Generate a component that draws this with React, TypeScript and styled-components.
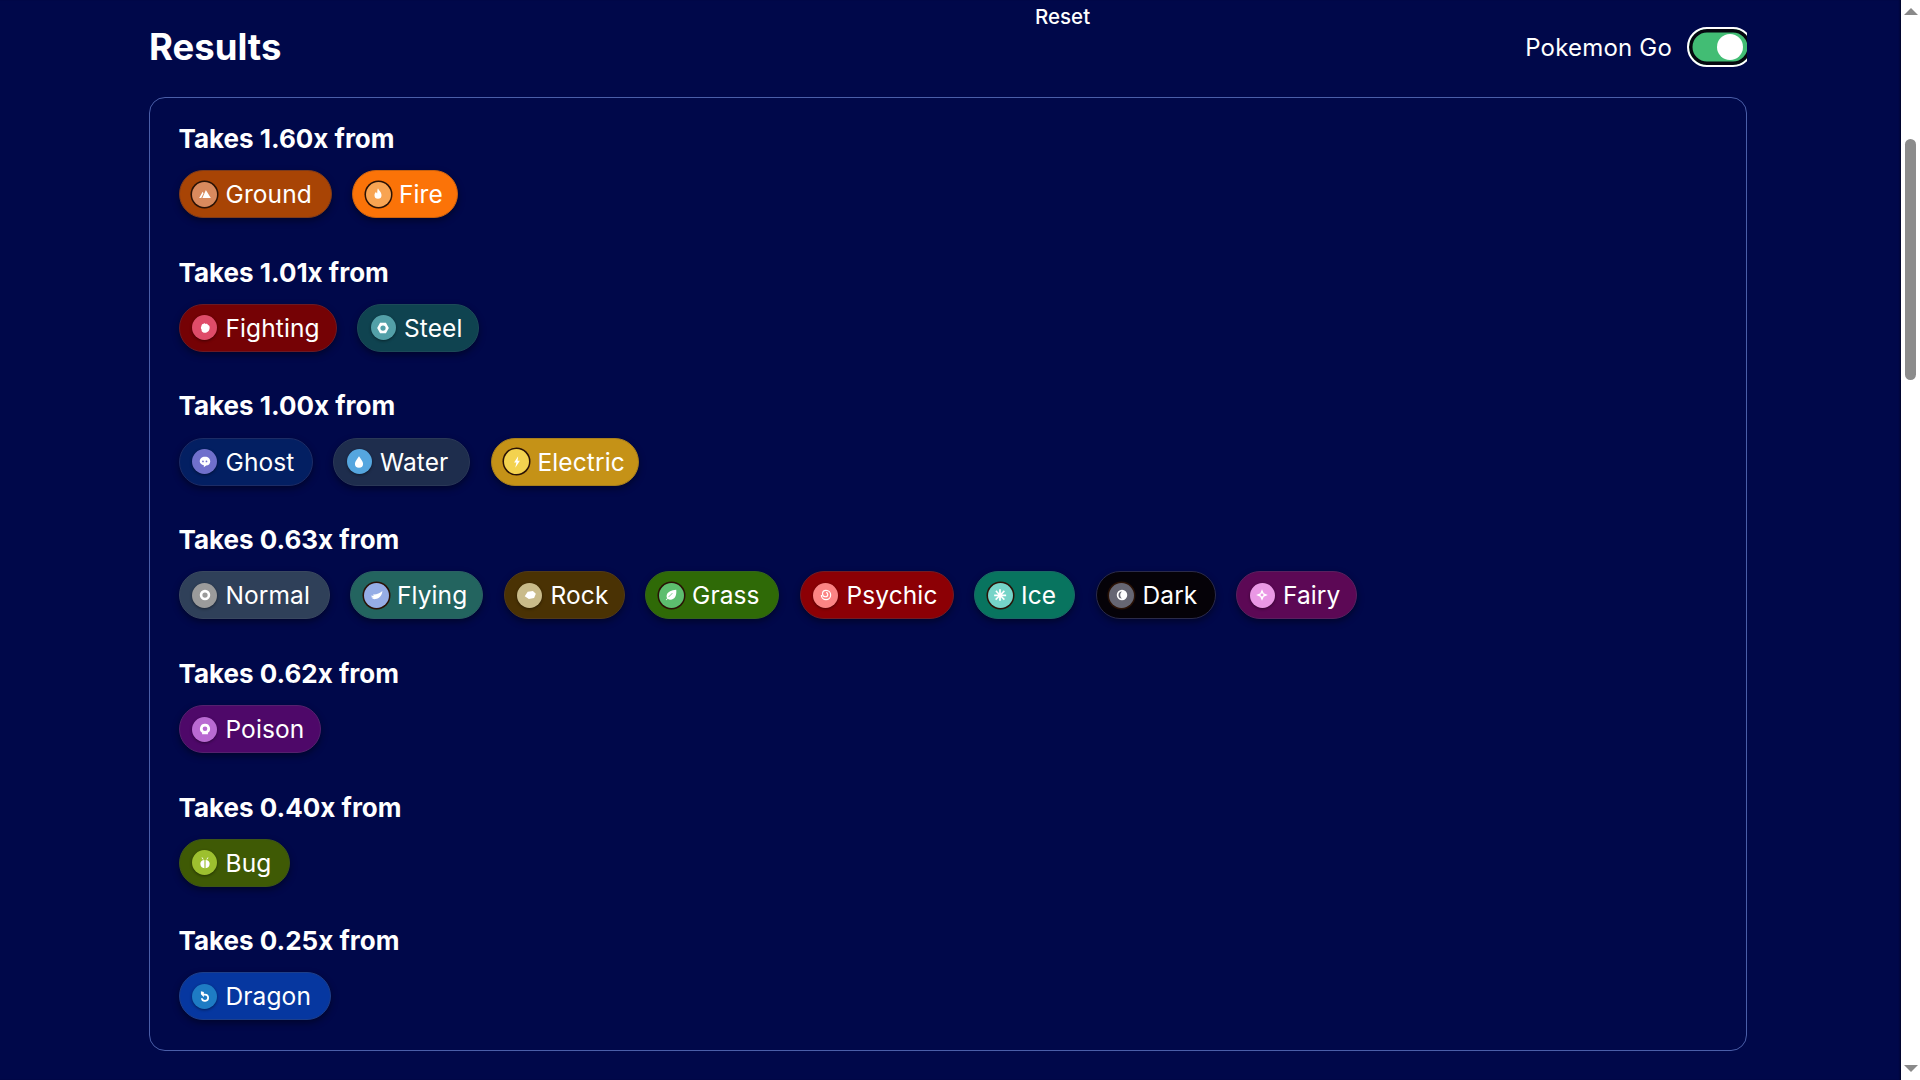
import React from 'react'
import styled, { createGlobalStyle } from 'styled-components'

const GlobalStyle = createGlobalStyle`
  html, body {
    margin: 0;
    padding: 0;
    height: 1080px;
    overflow: hidden;
    background: #00084a;
  }
  body {
    font-family: Inter, "Noto Sans", sans-serif;
    color: #fff;
  }
`

const Screen = styled.div`
  display: flex;
  width: 1920px;
  height: 1080px;
  overflow: hidden;
`
const Main = styled.main`
  flex: 1;
  min-width: 0;
  padding-left: 149px;
  background: #00084a;
  box-shadow: inset -2px 0 2px -1px rgba(0, 0, 0, 0.5);
`
const Content = styled.div`
  width: 1598px;
`
const ResetRow = styled.div`
  height: 27px;
  padding-left: 886px;
`
const ResetButton = styled.button`
  padding: 0;
  border: 0;
  background: none;
  color: #fff;
  font: 500 20.5px/33px Inter, sans-serif;
`
const HeaderRow = styled.div`
  display: flex;
  align-items: center;
  justify-content: space-between;
  height: 40px;
  margin-bottom: 30px;
`
const PageTitle = styled.h1`
  margin: 0;
  font-size: 36.5px;
  font-weight: 700;
  line-height: 40px;
`
const ToggleGroup = styled.div`
  display: flex;
  align-items: center;
  gap: 15px;
`
const ToggleLabel = styled.span`
  font-size: 24px;
  font-weight: 400;
  letter-spacing: 0.2px;
`
const ToggleClip = styled.div`
  width: 60px;
  height: 40px;
  overflow: hidden;
`
const ToggleTrack = styled.div`
  box-sizing: border-box;
  display: flex;
  align-items: center;
  justify-content: flex-end;
  width: 66px;
  height: 40px;
  padding: 2px 8px 2px 3px;
  border: 2px solid #fff;
  border-radius: 20px;
  background: #42bd74;
  box-shadow: inset 0 0 0 3.5px #05070f;
`
const ToggleThumb = styled.div`
  width: 26px;
  height: 26px;
  border-radius: 50%;
  background: #fff;
`
const Panel = styled.section`
  box-sizing: border-box;
  display: flex;
  flex-direction: column;
  gap: 34.5px;
  height: 954px;
  padding: 21px 28.5px 0;
  border: 1px solid #4a5ea8;
  border-radius: 16px;
`
const Group = styled.div`
  display: flex;
  flex-direction: column;
  gap: 11.5px;
`
const GroupTitle = styled.h2`
  margin: 0;
  font-size: 26px;
  font-weight: 700;
  line-height: 39.7px;
`
const PillRow = styled.div`
  display: flex;
  gap: 20.5px;
`
const Pill = styled.div<{ $bg: string; $edge: string; $width: number }>`
  box-sizing: border-box;
  display: flex;
  align-items: center;
  gap: 8.5px;
  width: ${({ $width }) => $width}px;
  height: 48px;
  padding-left: 12.5px;
  border: 1.5px solid ${({ $edge }) => $edge};
  border-radius: 24px;
  background: ${({ $bg }) => $bg};
  box-shadow: 0 3px 7px rgba(0, 0, 0, 0.4);
  font-size: 24.5px;
  letter-spacing: 0.1px;
`
const Badge = styled.span<{ $bg: string; $ring: boolean }>`
  display: flex;
  align-items: center;
  justify-content: center;
  width: 25px;
  height: 25px;
  border-radius: 50%;
  background: ${({ $bg }) => $bg};
  box-shadow: ${({ $ring }) => ($ring ? '0 0 0 1.5px #2a1206' : '0 1px 3px rgba(0, 0, 0, 0.45)')};
  svg {
    width: 14px;
    height: 14px;
    fill: #fff;
  }
`
const ScrollBar = styled.aside`
  display: flex;
  flex-direction: column;
  align-items: center;
  width: 19px;
  background: #fff;
`
const ScrollUp = styled.div`
  width: 0;
  height: 0;
  margin-top: 8px;
  border-left: 7px solid transparent;
  border-right: 7px solid transparent;
  border-bottom: 7px solid #8a8a8a;
`
const ScrollThumb = styled.div`
  width: 11px;
  height: 241px;
  margin-top: 124px;
  border-radius: 6px;
  background: #8c8c8c;
`
const ScrollDown = styled.div`
  width: 0;
  height: 0;
  margin-top: auto;
  margin-bottom: 8px;
  border-left: 7px solid transparent;
  border-right: 7px solid transparent;
  border-top: 7px solid #8a8a8a;
`

type TypeInfo = { bg: string; edge: string; badge: string; width: number; ring?: boolean; icon: React.ReactNode }

const types: Record<string, TypeInfo> = {
  Ground: {
    bg: '#a84405', edge: '#7c3a1c', badge: '#d98a5e', width: 153, ring: true,
    icon: <path d="M2 19 8 8l1.5 2.500L5.500 19zM7.500 19 13.500 5 22 19z" />,
  },
  Fire: {
    bg: '#fb7308', edge: '#c9610f', badge: '#f8a452', width: 106, ring: true,
    icon: <path d="M12 2c1 4 6 6 6 12a6 6 0 0 1-12 0c0-3 1.500-4.500 2.500-6 .5 1.500 1 2.500 2 3 .5-3 0-6 1.500-9z" />,
  },
  Fighting: {
    bg: '#750205', edge: '#6b1a24', badge: '#df4c69', width: 158,
    icon: <path d="M6 8c0-2 1.500-3 3-3 1-1.500 3-1.500 4 0 2-1 4 0 4 2 2 .5 3 2 3 4 0 5-3 9-8 9s-6-3-6-6c-1-1-1-2-1-3z" />,
  },
  Steel: {
    bg: '#0f4350', edge: '#1c4a58', badge: '#53a0a8', width: 122,
    icon: <path fillRule="evenodd" d="M7 3h10l5 9-5 9H7l-5-9zM12 7.500a4.500 4.500 0 1 0 0 9 4.500 4.500 0 0 0 0-9z" />,
  },
  Ghost: {
    bg: '#031f62', edge: '#1c2c66', badge: '#7070cc', width: 134,
    icon: <path fillRule="evenodd" d="M12 3c5.500 0 9 3.500 9 8 0 4-3 7-7 7l-4 3v-3.500C6 16.500 3 14 3 11c0-4.500 3.500-8 9-8zM8.500 9.500a1.500 1.500 0 1 0 0 3 1.500 1.500 0 0 0 0-3zm6 0a1.500 1.500 0 1 0 0 3 1.500 1.500 0 0 0 0-3z" />,
  },
  Water: {
    bg: '#1e2d4d', edge: '#2a3857', badge: '#55a6df', width: 137,
    icon: <path d="M12 2c3 5 7 8.500 7 13a7 7 0 0 1-14 0c0-4.500 4-8 7-13z" />,
  },
  Electric: {
    bg: '#c59217', edge: '#a87e1c', badge: '#f3d24f', width: 148, ring: true,
    icon: <path d="M14 2 7 13h4l-2 9 8-12h-4z" />,
  },
  Normal: {
    bg: '#2f4059', edge: '#39475f', badge: '#9b9b9b', width: 151,
    icon: <path fillRule="evenodd" d="M12 3a9 9 0 1 1 0 18 9 9 0 0 1 0-18zm0 4.500a4.500 4.500 0 1 0 0 9 4.500 4.500 0 0 0 0-9z" />,
  },
  Flying: {
    bg: '#23645f', edge: '#2b5f63', badge: '#96ade6', width: 133, ring: true,
    icon: <path d="M23 5c-1 8-5 13-12 14-3 .5-6-1-7-3 1 .5 2.500.5 4 0-2 0-4-1-5-3 2 .5 4 .5 6 0-1-.5-2-1-2-2 6 .5 11-2 16-6z" />,
  },
  Rock: {
    bg: '#4a3204', edge: '#50391a', badge: '#c9bb8a', width: 121,
    icon: <path d="M3 14 8 6.500l9-1.500 5 5-3 7-9 2z" />,
  },
  Grass: {
    bg: '#2f6a07', edge: '#35631c', badge: '#5dbe6f', width: 134, ring: true,
    icon: <path d="M21 3c1 9-2 17-10 17-2 0-3.500-.5-4.500-1.500L4 21l-1-1 2.500-2.500C4.500 16 4 14 5 11c1.500-4.500 8-7 16-8zM8 16l7-7-1-.5-6.500 6.500z" />,
  },
  Psychic: {
    bg: '#8c0005', edge: '#701c25', badge: '#fb8484', width: 154,
    icon: <path d="M12 3a9 9 0 1 1-9 9h2a7 7 0 1 0 7-7 5 5 0 0 0-5 5 4 4 0 0 0 4 4 3 3 0 0 0 3-3 2 2 0 0 0-2-2v-2a4 4 0 0 1 4 4 5 5 0 0 1-5 5 6 6 0 0 1-6-6 7 7 0 0 1 7-7z" />,
  },
  Ice: {
    bg: '#08745f', edge: '#1a6865', badge: '#76d4c8', width: 101, ring: true,
    icon: <path d="M10.500 2h3v7l5-5 2 2-5 5h7v3h-7l5 5-2 2-5-5v6h-3v-6l-5 5-2-2 5-5H2v-3h7L4 6l2-2 4.500 5z" />,
  },
  Dark: {
    bg: '#050208', edge: '#2a2a4a', badge: '#666673', width: 120, ring: true,
    icon: <path fillRule="evenodd" d="M12 3a9 9 0 1 1 0 18 9 9 0 0 1 0-18zm0 3a6 6 0 0 0 0 12c-2-1.500-3-3.500-3-6s1-4.500 3-6z" />,
  },
  Fairy: {
    bg: '#5c0855', edge: '#58205e', badge: '#ea98e5', width: 121,
    icon: <path fillRule="evenodd" d="M12 2l3 7 7 3-7 3-3 7-3-7-7-3 7-3zm0 7.500a2.500 2.500 0 1 0 0 5 2.500 2.500 0 0 0 0-5z" />,
  },
  Poison: {
    bg: '#4e0869', edge: '#55206e', badge: '#b96ad2', width: 142,
    icon: <path fillRule="evenodd" d="M12 3a8.500 8.500 0 0 1 5 15.500V21H7v-2.500A8.500 8.500 0 0 1 12 3zm0 4.500a4 4 0 1 0 0 8 4 4 0 0 0 0-8z" />,
  },
  Bug: {
    bg: '#3f5a05', edge: '#3d5518', badge: '#9dc02f', width: 111,
    icon: <path d="M11 7v14c-4 0-7-3-7-8 0-3 3-6 7-6zm2 0c4 0 7 3 7 6 0 5-3 8-7 8zM7 2l3 4H8.500L6 3zm10 0 1 1-2.500 3H14z" />,
  },
  Dragon: {
    bg: '#0637a0', edge: '#1d3f8a', badge: '#1e7cc4', width: 152,
    icon: <path d="M5 4l5 1v3h2a7 7 0 1 1-7 8h3a4 4 0 1 0 4-5h-2v3L5 9z" />,
  },
}

const groups: { label: string; names: string[] }[] = [
  { label: 'Takes 1.60x from', names: ['Ground', 'Fire'] },
  { label: 'Takes 1.01x from', names: ['Fighting', 'Steel'] },
  { label: 'Takes 1.00x from', names: ['Ghost', 'Water', 'Electric'] },
  { label: 'Takes 0.63x from', names: ['Normal', 'Flying', 'Rock', 'Grass', 'Psychic', 'Ice', 'Dark', 'Fairy'] },
  { label: 'Takes 0.62x from', names: ['Poison'] },
  { label: 'Takes 0.40x from', names: ['Bug'] },
  { label: 'Takes 0.25x from', names: ['Dragon'] },
]

const TypePill: React.FC<{ name: string }> = ({ name }) => {
  const info = types[name]
  return (
    <Pill $bg={info.bg} $edge={info.edge} $width={info.width}>
      <Badge $bg={info.badge} $ring={!!info.ring}>
        <svg viewBox="0 0 24 24">{info.icon}</svg>
      </Badge>
      {name}
    </Pill>
  )
}

const App: React.FC = () => {
  return (
    <Screen>
      <GlobalStyle />
      <Main>
        <Content>
          <ResetRow>
            <ResetButton>Reset</ResetButton>
          </ResetRow>
          <HeaderRow>
            <PageTitle>Results</PageTitle>
            <ToggleGroup>
              <ToggleLabel>Pokemon Go</ToggleLabel>
              <ToggleClip>
                <ToggleTrack>
                  <ToggleThumb />
                </ToggleTrack>
              </ToggleClip>
            </ToggleGroup>
          </HeaderRow>
          <Panel>
            {groups.map((group) => (
              <Group key={group.label}>
                <GroupTitle>{group.label}</GroupTitle>
                <PillRow>
                  {group.names.map((name) => (
                    <TypePill key={name} name={name} />
                  ))}
                </PillRow>
              </Group>
            ))}
          </Panel>
        </Content>
      </Main>
      <ScrollBar>
        <ScrollUp />
        <ScrollThumb />
        <ScrollDown />
      </ScrollBar>
    </Screen>
  )
}

export default App
